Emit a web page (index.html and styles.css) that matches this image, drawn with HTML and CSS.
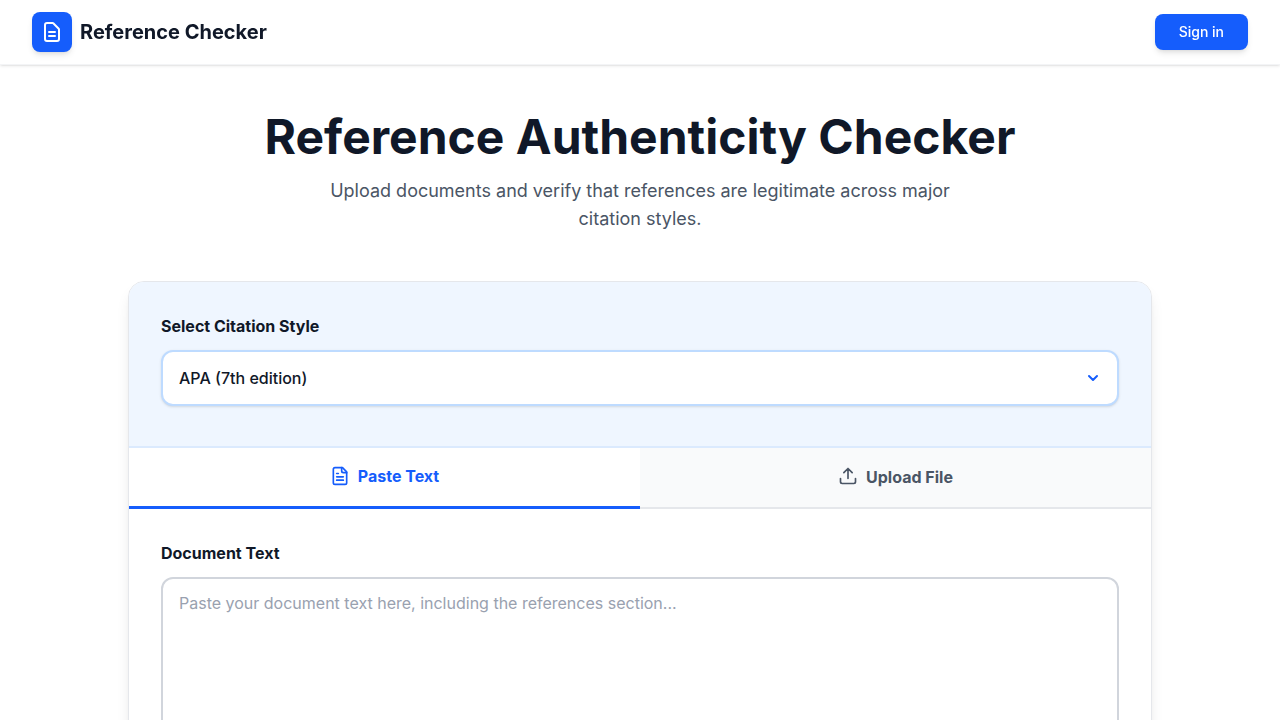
FILE: index.html
```
<!DOCTYPE html>
<html lang="en">
<head>
    <meta charset="UTF-8">
    <title>Reference Checker</title>
    <link rel="stylesheet" href="styles.css">
</head>
<body>
<header class="header">
    <a class="brand" href="#">
        <span class="brand-icon">
            <svg width="24" height="24" viewBox="0 0 24 24" fill="none" stroke="currentColor" stroke-width="2" stroke-linecap="round" stroke-linejoin="round">
                <path d="M9 12h6m-6 4h6m2 5H7a2 2 0 01-2-2V5a2 2 0 012-2h5.586a1 1 0 01.707.293l5.414 5.414a1 1 0 01.293.707V19a2 2 0 01-2 2z"/>
            </svg>
        </span>
        <span>Reference Checker</span>
    </a>
    <button class="sign-in">Sign in</button>
</header>

<main class="main">
    <div class="intro">
        <h1>Reference Authenticity Checker</h1>
        <p>Upload documents and verify that references are legitimate across major citation styles.</p>
    </div>

    <div class="card">
        <section class="style-section">
            <label class="label" for="citationStyle">Select Citation Style</label>
            <div class="select-wrap">
                <select id="citationStyle" name="citationStyle">
                    <option>APA (7th edition)</option>
                </select>
                <svg class="chevron" width="20" height="20" viewBox="0 0 20 20" fill="none" stroke="currentColor" stroke-width="2" stroke-linecap="round" stroke-linejoin="round">
                    <path d="M6 8l4 4 4-4"/>
                </svg>
            </div>
        </section>

        <div class="tabs">
            <button class="tab active">
                <svg width="20" height="20" viewBox="0 0 24 24" fill="none" stroke="currentColor" stroke-width="2" stroke-linecap="round" stroke-linejoin="round">
                    <path d="M15 2H6a2 2 0 0 0-2 2v16a2 2 0 0 0 2 2h12a2 2 0 0 0 2-2V7Z"/>
                    <path d="M14 2v4a2 2 0 0 0 2 2h4"/>
                    <path d="M10 9H8M16 13H8M16 17H8"/>
                </svg>
                Paste Text
            </button>
            <button class="tab">
                <svg width="20" height="20" viewBox="0 0 24 24" fill="none" stroke="currentColor" stroke-width="2" stroke-linecap="round" stroke-linejoin="round">
                    <path d="M21 15v4a2 2 0 0 1-2 2H5a2 2 0 0 1-2-2v-4"/>
                    <path d="M17 8l-5-5-5 5M12 3v12"/>
                </svg>
                Upload File
            </button>
        </div>

        <section class="text-section">
            <label class="label" for="documentText">Document Text</label>
            <textarea id="documentText" name="documentText" placeholder="Paste your document text here, including the references section..."></textarea>
        </section>
    </div>
</main>
</body>
</html>
```
FILE: styles.css
```
* {
    box-sizing: border-box;
    margin: 0;
    padding: 0;
}
html {
    scrollbar-width: none;
}
body {
    font-family: Inter, sans-serif;
    font-size: 16px;
    line-height: 24px;
    color: #101828;
    background: #fff;
}
button, select, textarea {
    font: inherit;
}
svg {
    display: block;
    flex-shrink: 0;
}

.header {
    position: sticky;
    top: 0;
    z-index: 10;
    display: flex;
    align-items: center;
    justify-content: space-between;
    height: 65px;
    padding: 0 32px;
    border-bottom: 1px solid #f3f4f6;
    background: rgba(255, 255, 255, .95);
    backdrop-filter: blur(8px);
    box-shadow: 0 1px 3px 0 rgba(0, 0, 0, .1), 0 1px 2px -1px rgba(0, 0, 0, .1);
}
.brand {
    display: flex;
    align-items: center;
    gap: 8px;
    font-size: 20px;
    line-height: 28px;
    font-weight: 700;
    color: #101828;
    text-decoration: none;
}
.brand-icon {
    display: flex;
    padding: 8px;
    border-radius: 8px;
    color: #fff;
    background: #155dfc;
    box-shadow: 0 4px 6px -1px rgba(0, 0, 0, .1), 0 2px 4px -2px rgba(0, 0, 0, .1);
}
.sign-in {
    padding: 8px 24px;
    border: 0;
    border-radius: 8px;
    font-size: 14px;
    line-height: 20px;
    font-weight: 500;
    color: #fff;
    background: #155dfc;
    box-shadow: 0 4px 6px -1px rgba(0, 0, 0, .1), 0 2px 4px -2px rgba(0, 0, 0, .1);
}

.main {
    max-width: 1024px;
    margin: 0 auto;
    padding: 48px 0;
}
.intro {
    margin-bottom: 48px;
    text-align: center;
}
.intro h1 {
    margin-bottom: 16px;
    font-size: 48px;
    line-height: 48px;
    font-weight: 700;
}
.intro p {
    max-width: 672px;
    margin: 0 auto;
    font-size: 18px;
    line-height: 28px;
    color: #4a5565;
}

.card {
    overflow: hidden;
    border: 1px solid #e5e7eb;
    border-radius: 16px;
    background: #fff;
    box-shadow: 0 10px 15px -3px rgba(0, 0, 0, .1), 0 4px 6px -4px rgba(0, 0, 0, .1);
}
.label {
    display: block;
    margin-bottom: 12px;
    font-weight: 700;
}

.style-section {
    padding: 32px 32px 40px;
    border-bottom: 2px solid #dbeafe;
    background: #eff6ff;
}
.select-wrap {
    position: relative;
}
.select-wrap select {
    display: block;
    width: 100%;
    height: 56px;
    padding: 0 48px 0 16px;
    appearance: none;
    border: 2px solid #bedbff;
    border-radius: 12px;
    font-weight: 500;
    color: #101828;
    background: #fff;
    box-shadow: 0 1px 3px 0 rgba(0, 0, 0, .1), 0 1px 2px -1px rgba(0, 0, 0, .1);
}
.chevron {
    position: absolute;
    top: 18px;
    right: 16px;
    color: #155dfc;
    pointer-events: none;
}

.tabs {
    display: grid;
    grid-template-columns: 1fr 1fr;
    height: 61px;
}
.tab {
    display: flex;
    align-items: center;
    justify-content: center;
    gap: 8px;
    padding-bottom: 2px;
    border: 0;
    border-bottom: 2px solid #e5e7eb;
    font-weight: 700;
    color: #4a5565;
    background: #f9fafb;
}
.tab svg {
    margin-bottom: 1px;
}
.tab.active {
    border-bottom: 3px solid #155dfc;
    color: #155dfc;
    background: #fff;
}
.tab.active svg {
    margin-bottom: 0;
}

.text-section {
    padding: 32px;
}
.text-section textarea {
    display: block;
    width: 100%;
    height: 256px;
    padding: 12px 16px;
    resize: none;
    border: 2px solid #d1d5dc;
    border-radius: 12px;
    color: #101828;
}
.text-section textarea::placeholder {
    color: #99a1af;
}
```
